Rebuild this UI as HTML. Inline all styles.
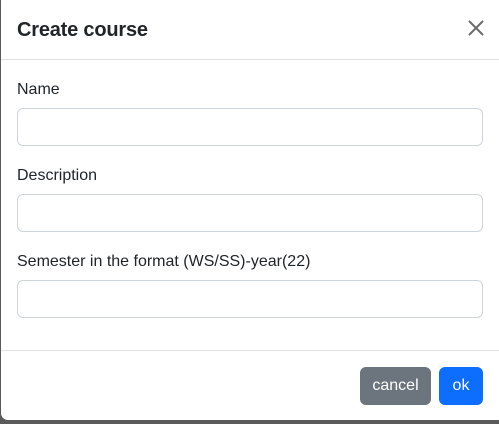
<!DOCTYPE html>
<html><head><style>
*{box-sizing:border-box}
body{margin:0;width:499px;height:424px;background:#5a5a5a;font-family:"Liberation Sans",sans-serif;color:#212529;overflow:hidden;position:relative}
.m{position:absolute;left:1px;top:-6px;width:504px;height:426px;background:#fff;border-radius:7px}
.h{position:absolute;left:0;top:6px;width:498px;height:60px;border-bottom:1px solid #dee2e6}
.t{position:absolute;left:16px;top:19px;font-size:20px;font-weight:bold;letter-spacing:-0.2px}
.x{position:absolute;left:466px;top:19px}
.l{position:absolute;left:16px;font-size:16px}
.i{position:absolute;left:16px;width:466px;height:38px;border:1px solid #ced4da;border-radius:6px}
.f{position:absolute;left:0;top:356px;width:498px;border-top:1px solid #dee2e6}
.b{position:absolute;top:373px;height:38px;border-radius:6px;color:#fff;font-size:16px;text-align:center;line-height:38px}
</style></head><body>
<div class="m">
<div class="h"><div class="t">Create course</div>
<svg class="x" width="18" height="18" viewBox="0 0 18 18"><path d="M2 2L16 16M16 2L2 16" stroke="#6c6c6c" stroke-width="2"/></svg></div>
<div class="l" style="top:87px">Name</div>
<div class="i" style="top:114px"></div>
<div class="l" style="top:173px">Description</div>
<div class="i" style="top:200px"></div>
<div class="l" style="top:259px">Semester in the format (WS/SS)-year(22)</div>
<div class="i" style="top:286px"></div>
<div class="f"></div>
<div class="b" style="left:359px;width:71px;background:#6c757d">cancel</div>
<div class="b" style="left:438px;width:44px;background:#0d6efd">ok</div>
</div>
</body></html>
